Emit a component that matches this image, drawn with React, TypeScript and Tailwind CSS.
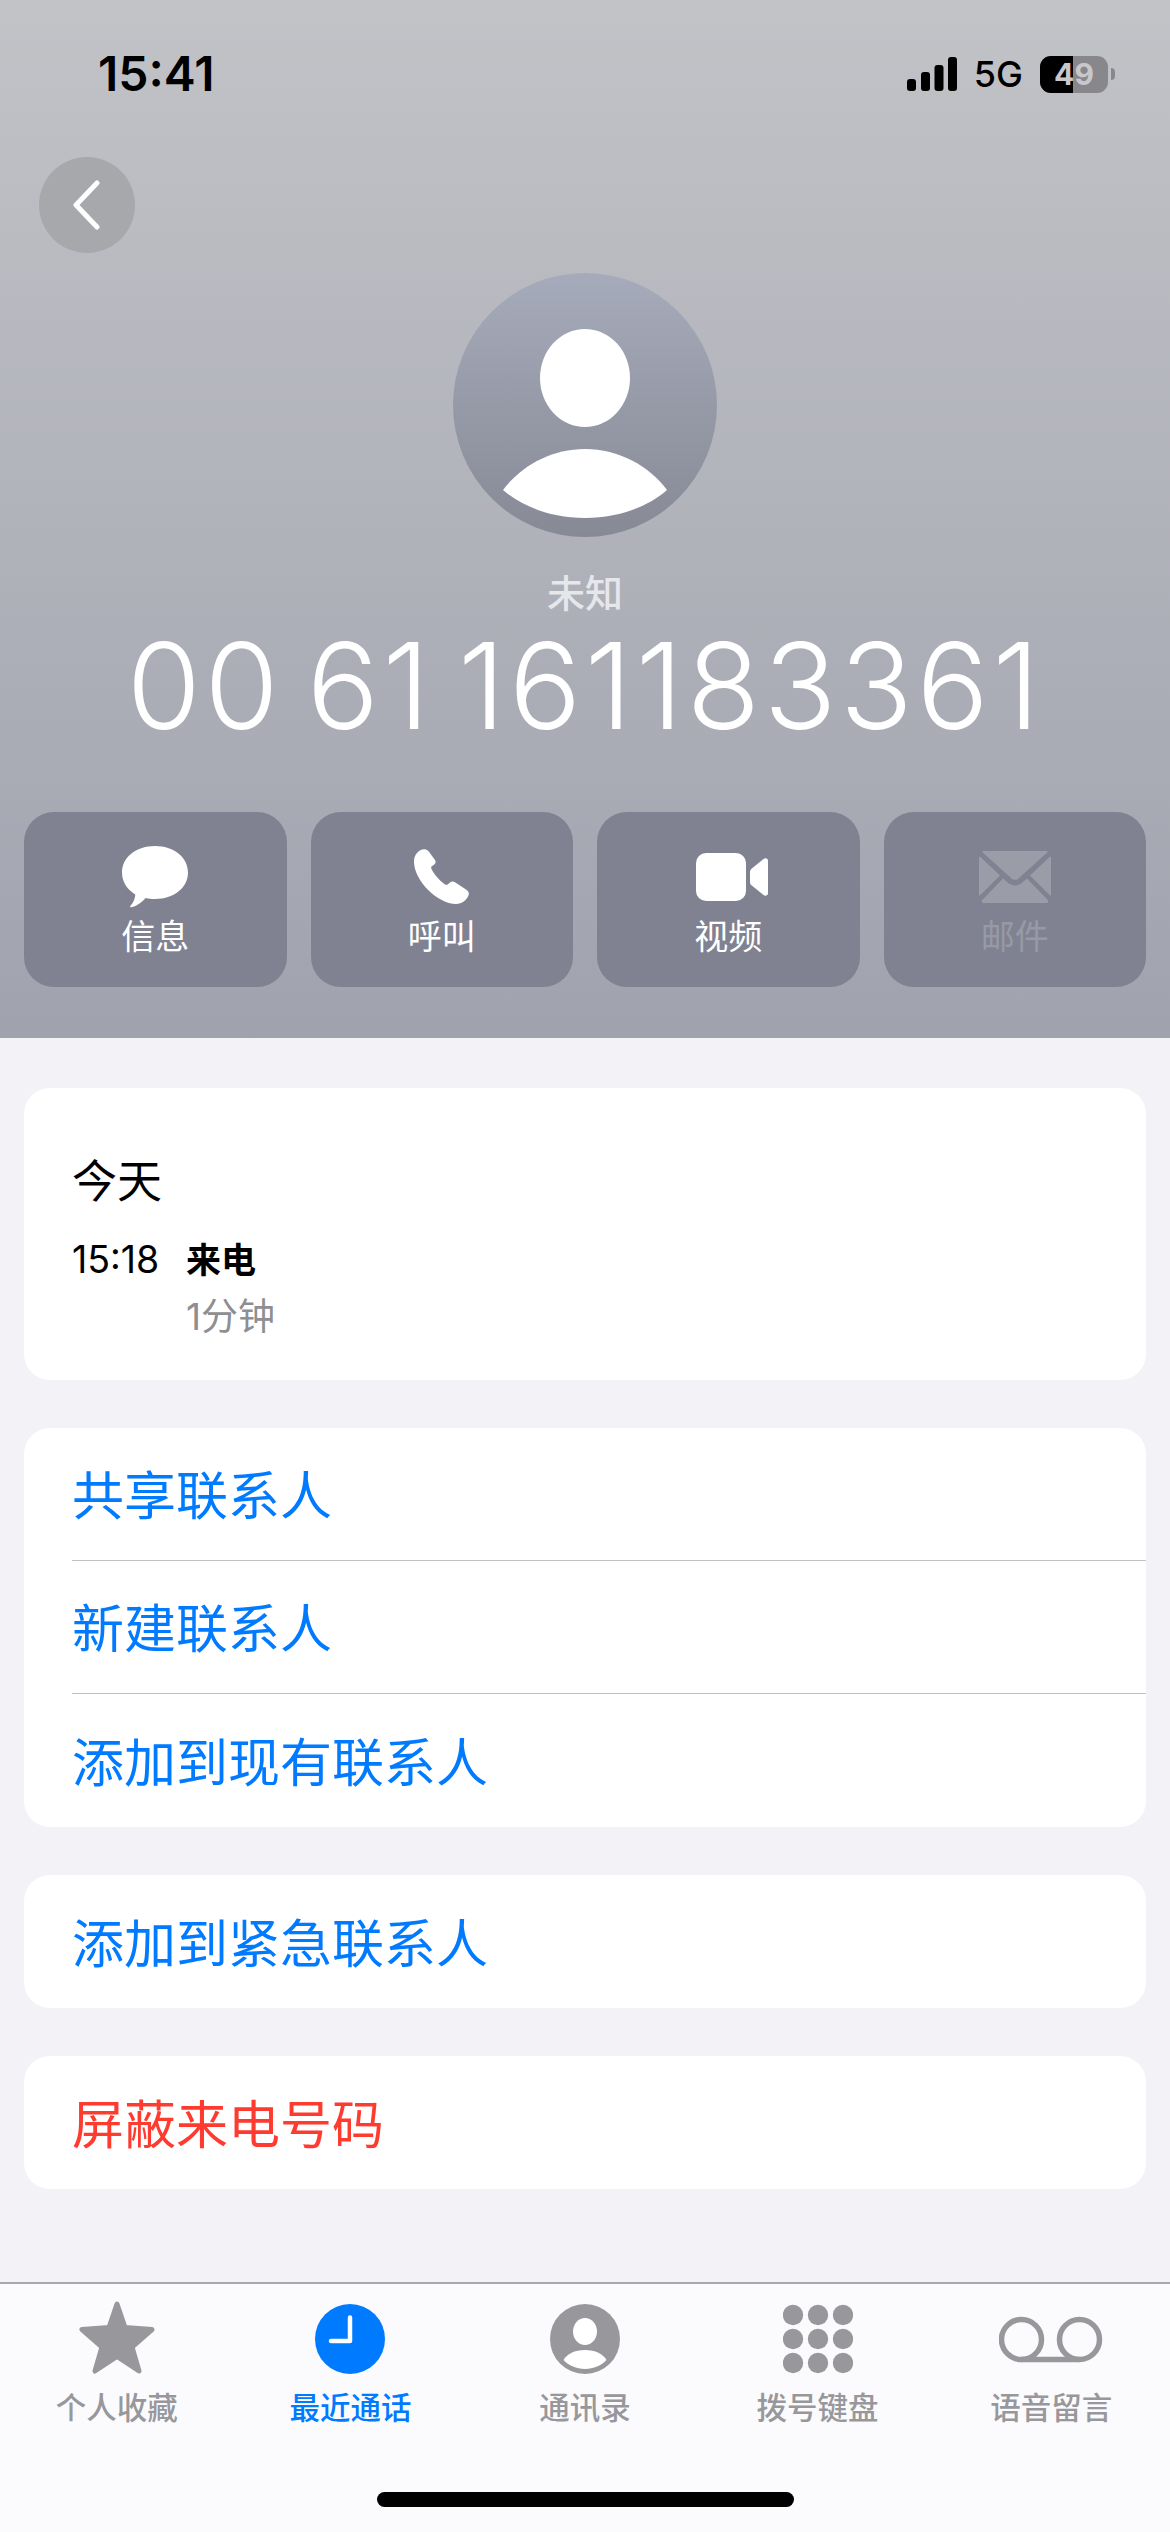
import React from 'react';

const font = { fontFamily: 'Inter, "Noto Sans CJK SC", sans-serif' };

function BubbleIcon() {
  return (
    <svg width="68" height="62" viewBox="0 0 68 62" fill="white">
      <path d="M34 0C52.500 0 67 11 67 26.500S52.500 53 34 53c-3.500 0-6.500-.3-9.500-1C21 56.500 14.500 60.500 10.500 61.300c-1.200.2-1.700-.8-1-1.600 2-2.200 4.200-5 4.800-11.200C6.300 43.700 1 36 1 26.500 1 11 15.500 0 34 0Z" />
    </svg>
  );
}

function PhoneIcon() {
  return (
    <svg width="56" height="55" viewBox="0 0 56 55" fill="white">
      <path d="M3 4C5 1.500 8 0 11 .3c2 .3 3.500 1.700 4.500 3.200L21 11c1 1.500.8 3-.5 4.200l-3 2.300c-.5.500-.5 1.500 0 2.500 2.500 5 7.500 11 13.500 15.500 1 .5 2 .5 3-.2l2-1.800c1.500-1.200 3.500-1.200 5-.2l11 7.200c2.500 1.500 3.500 3.500 2.500 6C52.500 51 48 55 42 55 24 55 0 32 0 12.500 0 9 1 6 3 4Z" />
    </svg>
  );
}

function VideoIcon() {
  return (
    <svg className="ml-[7px]" width="72" height="48" viewBox="0 0 72 48" fill="white">
      <rect x="0" y="0" width="50" height="48" rx="10" />
      <path d="M54 19c0-1.500.6-2.500 1.500-3.300L67.500 6C69.300 4.700 72 5.400 72 7.800v32.400c0 2.400-2.700 3.100-4.500 1.800L55.500 32.300C54.600 31.500 54 30.500 54 29Z" />
    </svg>
  );
}

function MailIcon() {
  return (
    <svg width="72" height="52" viewBox="0 0 72 52" fill="#9a9ca8">
      <path d="M5 0h62c1.500 0 2 .8 1.200 1.600L39.500 27.500c-2 1.800-5 1.800-7 0L3.800 1.600C3 .8 3.500 0 5 0Z" />
      <path d="M0 6.500c0-.8.800-1 1.400-.5L21 24.500 .9 44.500c-.4.400-.9.200-.9-.4Z" />
      <path d="M72 6.500c0-.8-.8-1-1.400-.5L51 24.500l20.100 20c.4.400.9.200.9-.4Z" />
      <path d="M24 27.500l5.500 4.800c3.600 2.800 9.400 2.800 13 0l5.500-4.800L69 49.300c.8 1.200 0 2.700-1.500 2.700h-63C3 52 2.200 50.500 3 49.300Z" />
    </svg>
  );
}

function StarIcon() {
  return (
    <svg width="76" height="73" viewBox="0 0 76 73" fill="#98989c">
      <path
        d="M38 3 46 26.500 73 28.500 53 46 60 70 38 55.500 16 70 23 46 3 28.500 30 26.500Z"
        stroke="#98989c"
        strokeWidth="5"
        strokeLinejoin="round"
      />
    </svg>
  );
}

function ClockIcon() {
  return (
    <svg width="70" height="70" viewBox="0 0 70 70">
      <circle cx="35" cy="35" r="35" fill="#007aff" />
      <path d="M35 13.500v23.500H16" fill="none" stroke="white" strokeWidth="4.500" strokeLinecap="round" strokeLinejoin="round" />
    </svg>
  );
}

function ContactIcon() {
  return (
    <svg width="70" height="70" viewBox="0 0 70 70">
      <circle cx="35" cy="35" r="35" fill="#98989c" />
      <ellipse cx="35" cy="27.500" rx="12" ry="13.500" fill="white" />
      <path d="M13.500 56c3.500-6 11-10 21.500-10s18 4 21.500 10c-5 5.500-13 9-21.500 9s-16.500-3.500-21.500-9Z" fill="white" />
    </svg>
  );
}

function KeypadIcon() {
  const xs = [10, 35, 60];
  const ys = [11, 35, 59];
  return (
    <svg width="70" height="70" viewBox="0 0 70 70" fill="#98989c">
      {ys.map((y) =>
        xs.map((x) => <circle key={`${x}-${y}`} cx={x} cy={y} r="10.200" />),
      )}
    </svg>
  );
}

function VoicemailIcon() {
  return (
    <svg width="104" height="70" viewBox="0 0 104 70" fill="none" stroke="#98989c" strokeWidth="5.500">
      <circle cx="22.500" cy="35.500" r="20" />
      <circle cx="80.500" cy="35.500" r="20" />
      <path d="M22.500 55.500h58" />
    </svg>
  );
}

function ActionButton({ icon, label, muted }: { icon: React.ReactNode; label: string; muted?: boolean }) {
  return (
    <div className="flex-1 h-[175px] rounded-[30px] bg-[#808292] flex flex-col items-center pt-[33px]">
      <div className="h-[63px] flex items-center justify-center">{icon}</div>
      <div className={`mt-[7px] text-[34px] leading-[44px] ${muted ? 'text-[#979aa6]' : 'text-white'}`}>{label}</div>
    </div>
  );
}

function LinkRow({ label, divider, danger }: { label: string; divider?: boolean; danger?: boolean }) {
  return (
    <div className={`h-[133px] flex items-center text-[52px] ${danger ? 'text-[#ff3b30]' : 'text-[#007aff]'}`}>
      <div className={`flex-1 h-full pt-[6px] flex items-center ${divider ? 'border-b border-[#c0c0c2]' : ''}`}>{label}</div>
    </div>
  );
}

function Tab({ icon, label, active, className }: { icon: React.ReactNode; label: string; active?: boolean; className?: string }) {
  return (
    <div className={`flex flex-col items-center ${className ?? ''}`}>
      <div className="h-[74px] flex items-end justify-center">{icon}</div>
      <div className={`mt-[16px] text-[30.5px] leading-[36px] font-medium ${active ? 'text-[#007aff]' : 'text-[#98989c]'}`}>{label}</div>
    </div>
  );
}

export default function App() {
  return (
    <div style={font} className="w-[1170px] h-[2532px] bg-[#f2f2f7] flex flex-col overflow-hidden">
      {/* Header */}
      <div className="h-[1038px] bg-gradient-to-b from-[#c2c3c7] to-[#a0a2ae] flex flex-col">
        <div className="h-[157px] flex items-start justify-between pt-[46px] pl-[98px] pr-[55px]">
          <div className="text-[48px] leading-[56px] font-semibold text-black">15:41</div>
          <div className="flex items-center h-[56px] gap-[17px]">
            <svg width="50" height="34" viewBox="0 0 50 34" fill="black">
              <rect x="0" y="22" width="9" height="12" rx="3" />
              <rect x="14" y="15" width="9" height="19" rx="3" />
              <rect x="27.500" y="8" width="9" height="26" rx="3" />
              <rect x="41" y="0" width="9" height="34" rx="3" />
            </svg>
            <div className="text-[36px] leading-[40px] font-medium text-black">5G</div>
            <div className="flex items-center gap-[3px]">
              <div className="relative w-[68px] h-[37px] rounded-[11px] overflow-hidden bg-[#88888c] flex">
                <div className="w-[33px] bg-black" />
                <div className="absolute inset-0 flex items-center justify-center text-[30px] font-bold text-[#c8c8cc]">49</div>
              </div>
              <div className="w-[4px] h-[12px] rounded-r-full bg-[#88888c]" />
            </div>
          </div>
        </div>
        <div className="ml-[39px] w-[96px] h-[96px] rounded-full bg-[#a7a8ac] flex items-center justify-center">
          <svg width="34" height="50" viewBox="0 0 34 50" fill="none" stroke="white" strokeWidth="5" strokeLinecap="round" strokeLinejoin="round">
            <path d="M27 3 6 25l21 22" />
          </svg>
        </div>
        <div className="mt-[20px] mx-auto w-[264px] h-[264px] rounded-full overflow-hidden bg-gradient-to-b from-[#a6abbb] to-[#878a95]">
          <svg width="264" height="264" viewBox="0 0 264 264" fill="white">
            <ellipse cx="132" cy="105" rx="45" ry="49" />
            <path d="M50 217c18-24 48-41 82-41s64 17 82 41c-18 16-48 28-82 28s-64-12-82-28Z" />
          </svg>
        </div>
        <div className="mt-[31px] text-center text-[38px] leading-[50px] font-medium text-[#e6e7ea]">未知</div>
        <div className="mt-[3px] text-center text-[120px] leading-[130px] font-light tracking-[3.7px] [word-spacing:-13px] text-white whitespace-nowrap">00 61 161183361</div>
        <div className="mt-[61px] px-[24px] flex gap-[24px]">
          <ActionButton icon={<BubbleIcon />} label="信息" />
          <ActionButton icon={<PhoneIcon />} label="呼叫" />
          <ActionButton icon={<VideoIcon />} label="视频" />
          <ActionButton icon={<MailIcon />} label="邮件" muted />
        </div>
      </div>

      {/* Body */}
      <div className="flex-1 px-[24px] pt-[50px] flex flex-col gap-[48px]">
        <div className="h-[292px] rounded-[26px] bg-white pl-[48px] pt-[64px]">
          <div className="text-[45px] leading-[60px] text-black">今天</div>
          <div className="mt-[24px] flex">
            <div className="w-[114px] text-[37.5px] leading-[48px] text-black">15:18</div>
            <div className="flex flex-col">
              <div className="text-[35px] leading-[48px] font-semibold text-black">来电</div>
              <div className="mt-[9px] text-[37px] leading-[48px] text-[#8e8e93]">1分钟</div>
            </div>
          </div>
        </div>
        <div className="rounded-[26px] bg-white pl-[48px]">
          <LinkRow label="共享联系人" divider />
          <LinkRow label="新建联系人" divider />
          <LinkRow label="添加到现有联系人" />
        </div>
        <div className="rounded-[26px] bg-white pl-[48px]">
          <LinkRow label="添加到紧急联系人" />
        </div>
        <div className="rounded-[26px] bg-white pl-[48px]">
          <LinkRow label="屏蔽来电号码" danger />
        </div>
      </div>

      {/* Tab bar */}
      <div className="h-[250px] bg-[#fbfbfd] border-t-2 border-[#a9a9ad] flex flex-col">
        <div className="grid grid-cols-5 pt-[16px] pr-[2px]">
          <Tab icon={<StarIcon />} label="个人收藏" />
          <Tab icon={<ClockIcon />} label="最近通话" active />
          <Tab icon={<ContactIcon />} label="通讯录" className="pl-[2px]" />
          <Tab icon={<KeypadIcon />} label="拨号键盘" />
          <Tab icon={<VoicemailIcon />} label="语音留言" />
        </div>
        <div className="mt-[66px] mx-auto w-[417px] h-[15px] rounded-full bg-black" />
      </div>
    </div>
  );
}
